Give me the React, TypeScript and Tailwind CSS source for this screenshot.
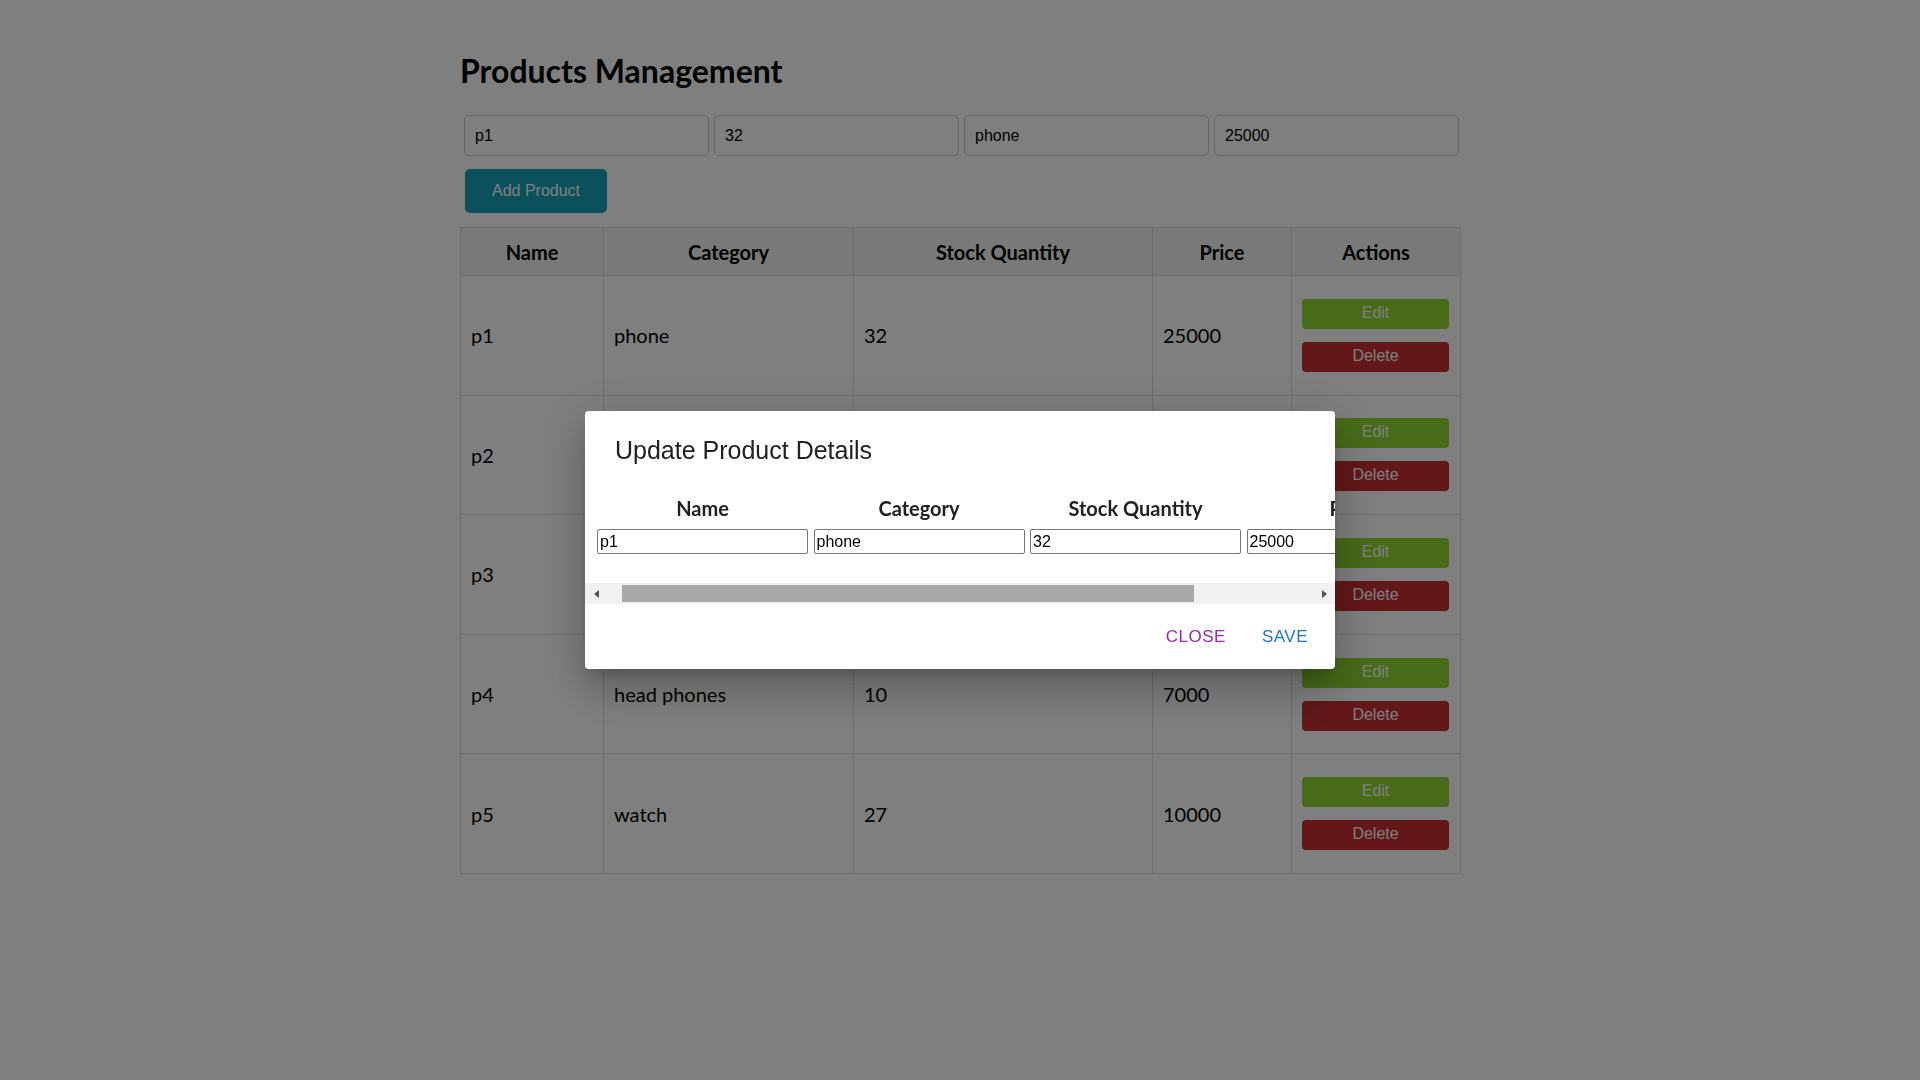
import React from 'react';

const products = [
  { name: 'p1', category: 'phone', stock: 32, price: 25000 },
  { name: 'p2', category: 'laptop', stock: 15, price: 60000 },
  { name: 'p3', category: 'tablet', stock: 20, price: 30000 },
  { name: 'p4', category: 'head phones', stock: 10, price: 7000 },
  { name: 'p5', category: 'watch', stock: 27, price: 10000 },
];

const editFields = [
  { label: 'Name', value: 'p1' },
  { label: 'Category', value: 'phone' },
  { label: 'Stock Quantity', value: '32' },
  { label: 'Price', value: '25000' },
];

function App() {
  return (
    <div className="min-h-screen bg-white font-['Lato',sans-serif] text-black">
      <div className="w-[1000px] mx-auto pt-[52px]">
        <h1 className="text-[32px] leading-[38px] font-bold m-0">Products Management</h1>

        <div className="flex gap-[5px] pl-[4px] mt-[25px] font-['Liberation_Sans',Arial,sans-serif]">
          {['p1', '32', 'phone', '25000'].map((v) => (
            <input
              key={v}
              defaultValue={v}
              className="w-[245px] h-[41px] px-[10px] text-[16px] text-black border border-[#cccccc] rounded-[5px] outline-none"
            />
          ))}
        </div>

        <button className="mt-[13px] ml-[5px] w-[142px] h-[44px] rounded-[5px] bg-[#17a2b8] text-white text-[16px] font-['Liberation_Sans',Arial,sans-serif]">
          Add Product
        </button>

        <table className="mt-[14px] w-[1000px] table-fixed border-collapse text-[20px]">
          <thead>
            <tr className="bg-[#f3f3f3]">
              <th className="w-[143px] h-[48px] border border-[#dddddd] font-bold">Name</th>
              <th className="w-[250px] border border-[#dddddd] font-bold">Category</th>
              <th className="w-[299px] border border-[#dddddd] font-bold">Stock Quantity</th>
              <th className="w-[139px] border border-[#dddddd] font-bold">Price</th>
              <th className="w-[169px] border border-[#dddddd] font-bold">Actions</th>
            </tr>
          </thead>
          <tbody>
            {products.map((p) => (
              <tr key={p.name}>
                <td className="border border-[#dddddd] px-[10px]">{p.name}</td>
                <td className="border border-[#dddddd] px-[10px]">{p.category}</td>
                <td className="border border-[#dddddd] px-[10px]">{p.stock}</td>
                <td className="border border-[#dddddd] px-[10px]">{p.price}</td>
                <td className="border border-[#dddddd] px-[10px] py-[22.8px]">
                  <div className="flex flex-col gap-[13px] font-['Liberation_Sans',Arial,sans-serif] text-[16px] leading-[28px]">
                    <button className="h-[30px] w-[147px] rounded-[4px] bg-[#8fd632] text-white pb-[2px]">Edit</button>
                    <button className="h-[30px] w-[147px] rounded-[4px] bg-[#c62e32] text-white pb-[2px]">Delete</button>
                  </div>
                </td>
              </tr>
            ))}
          </tbody>
        </table>
      </div>

      {/* backdrop + dialog */}
      <div className="fixed inset-0 bg-black/50 flex items-center justify-center">
        <div className="w-[750px] bg-white rounded-[4px] shadow-[0px_11px_15px_-7px_rgba(0,0,0,0.2),0px_24px_38px_3px_rgba(0,0,0,0.14),0px_9px_46px_8px_rgba(0,0,0,0.12)] text-[#212121]">
          <h2 className="pt-[20px] pl-[30px] text-[25px] leading-[38px] font-normal font-['Liberation_Sans',Arial,sans-serif]">
            Update Product Details
          </h2>

          <div className="mt-[27px] overflow-hidden">
            <div className="flex gap-[5.5px] pl-[12px] w-max">
              {editFields.map((f) => (
                <div key={f.label} className="w-[211px] flex flex-col items-center">
                  <div className="text-[20px] leading-[24px] font-bold">{f.label}</div>
                  <input
                    defaultValue={f.value}
                    className="mt-[9px] w-[211px] h-[25px] px-[2px] border border-[#767676] rounded-[2px] text-[16px] text-black font-['Liberation_Sans',Arial,sans-serif] outline-none"
                  />
                </div>
              ))}
            </div>
          </div>

          {/* horizontal scrollbar */}
          <div className="mt-[29px] h-[21px] bg-[#f1f1f1] flex items-center">
            <div className="w-[22px] h-full flex items-center justify-center">
              <svg width="5" height="8" viewBox="0 0 5 8"><path d="M5 0 L0 4 L5 8 Z" fill="#505050" /></svg>
            </div>
            <div className="flex-1 h-full py-[2px]">
              <div className="ml-[15px] w-[572px] h-full bg-[#a8a8a8]" />
            </div>
            <div className="w-[22px] h-full flex items-center justify-center">
              <svg width="5" height="8" viewBox="0 0 5 8"><path d="M0 0 L5 4 L0 8 Z" fill="#505050" /></svg>
            </div>
          </div>

          <div className="flex justify-end items-center gap-[36px] pr-[27px] h-[65px] font-['Liberation_Sans',Arial,sans-serif] text-[17px] tracking-[0.5px]">
            <button className="text-[#9c27b0]">CLOSE</button>
            <button className="text-[#1976d2]">SAVE</button>
          </div>
        </div>
      </div>
    </div>
  );
}

export default App;
